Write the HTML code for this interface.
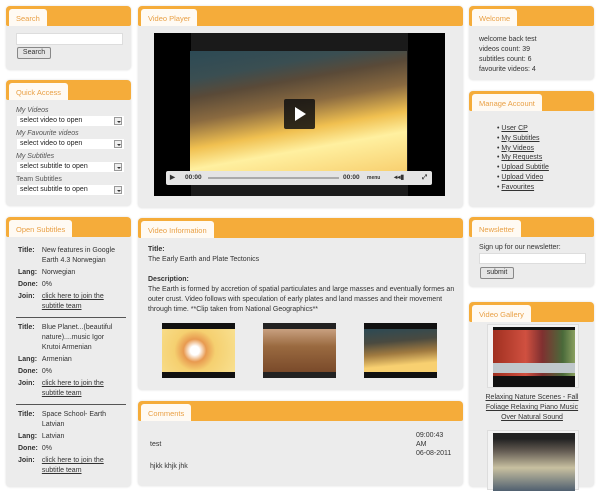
<!DOCTYPE html>
<html><head><meta charset="utf-8"><style>
*{margin:0;padding:0;box-sizing:border-box}
body{width:600px;height:480px;overflow:hidden;background:#fff;font-family:"Liberation Sans",sans-serif;font-size:7px;color:#333;position:relative}
.p{position:absolute;background:#ececec;border-radius:4px;box-shadow:0 0 2px #ddd}
.h{position:absolute;left:0;right:0;top:0;height:20px;background:#f5ac3a;border-radius:4px 4px 2px 2px}
.t{position:absolute;left:3px;top:3px;height:17px;background:#fffaf3;color:#e9a045;font-size:7.5px;padding:5px 7px 0 7px;border-radius:3px 3px 0 0}
.a{position:absolute}
.sel{position:absolute;height:10px;background:#fff;font-size:7px;padding:1px 3px;color:#222}
.sel b{position:absolute;right:2px;top:1px;width:8px;height:8px;border:1px solid #999;background:#eee}
.sel b:after{content:"";position:absolute;left:1.5px;top:2.5px;border:2px solid transparent;border-top:2px solid #333}
.it{font-style:italic;color:#555}
u{color:#333}
.btn{position:absolute;background:#e5e5e5;border:1px solid #888;border-radius:2px;font-size:7px;text-align:center;line-height:10px}
table td{font-size:7px;vertical-align:top;padding:1px 2px;line-height:10px}
</style></head><body>

<div class="p" style="left:6px;top:6px;width:125px;height:64px"><div class="h"></div><div class="t" style="left:3px">Search</div>
<div class="a" style="left:10px;top:27px;width:107px;height:12px;background:#fff;border:1px solid #ddd"></div>
<div class="btn" style="left:11px;top:41px;width:34px;height:12px">Search</div></div>

<div class="p" style="left:6px;top:80px;width:125px;height:126px"><div class="h"></div><div class="t">Quick Access</div>
<div class="a it" style="left:10px;top:27px">My Videos</div>
<div class="sel" style="left:11px;top:36px;width:107px">select video to open<b></b></div>
<div class="a it" style="left:10px;top:50px">My Favourite videos</div>
<div class="sel" style="left:11px;top:59px;width:107px">select video to open<b></b></div>
<div class="a it" style="left:10px;top:73px">My Subtitles</div>
<div class="sel" style="left:11px;top:82px;width:107px">select subtitle to open<b></b></div>
<div class="a" style="left:10px;top:96px;color:#555">Team Subtitles</div>
<div class="sel" style="left:11px;top:105px;width:107px">select subtitle to open<b></b></div></div>

<div class="p" style="left:6px;top:217px;width:125px;height:270px"><div class="h"></div><div class="t">Open Subtitles</div>
<table class="a" style="left:10px;top:28px;width:110px;border-collapse:collapse">
<tr><td><b>Title:</b></td><td>New features in Google Earth 4.3 Norwegian</td></tr>
<tr><td><b>Lang:</b></td><td>Norwegian</td></tr>
<tr><td><b>Done:</b></td><td>0%</td></tr>
<tr><td><b>Join:</b></td><td><u>click here to join the subtitle team</u></td></tr>
<tr><td colspan="2" style="padding:4px 0"><div style="border-top:1px solid #555"></div></td></tr>
<tr><td><b>Title:</b></td><td>Blue Planet...(beautiful nature)....music Igor Krutoi Armenian</td></tr>
<tr><td><b>Lang:</b></td><td>Armenian</td></tr>
<tr><td><b>Done:</b></td><td>0%</td></tr>
<tr><td><b>Join:</b></td><td><u>click here to join the subtitle team</u></td></tr>
<tr><td colspan="2" style="padding:4px 0"><div style="border-top:1px solid #555"></div></td></tr>
<tr><td><b>Title:</b></td><td>Space School- Earth Latvian</td></tr>
<tr><td><b>Lang:</b></td><td>Latvian</td></tr>
<tr><td><b>Done:</b></td><td>0%</td></tr>
<tr><td><b>Join:</b></td><td><u>click here to join the subtitle team</u></td></tr>
</table></div>

<div class="p" style="left:138px;top:6px;width:325px;height:202px"><div class="h"></div><div class="t">Video Player</div>
<div class="a" style="left:16px;top:27px;width:291px;height:163px;background:#000">
 <div class="a" style="left:37px;top:0;width:217px;height:163px;background:#1a1a1a"></div>
 <div class="a" style="left:36px;top:18px;width:217px;height:120px;background:linear-gradient(170deg,#2c4a55 0%,#3a4e52 18%,#5a4a38 30%,#8a6a40 45%,#f0c050 62%,#fff0a0 75%,#f8d070 100%)"></div>
 <div class="a" style="left:130px;top:66px;width:31px;height:30px;background:#111;opacity:.85;border-radius:2px"></div>
 <div class="a" style="left:141px;top:74px;border-left:11px solid #fff;border-top:7px solid transparent;border-bottom:7px solid transparent"></div>
 <div class="a" style="left:12px;top:138px;width:266px;height:14px;background:#e4e4e4;border-radius:2px;font-size:6.5px;font-weight:bold;line-height:14px;color:#333">
  <span class="a" style="left:4px">&#9654;</span><span class="a" style="left:19px">00:00</span>
  <span class="a" style="left:42px;top:6px;width:131px;height:2px;background:#aaa"></span>
  <span class="a" style="left:177px">00:00</span><span class="a" style="left:201px;font-size:5px">menu</span>
  <span class="a" style="left:228px">◂◂▮</span><span class="a" style="left:256px">⤢</span></div>
</div></div>

<div class="p" style="left:138px;top:218px;width:325px;height:172px"><div class="h"></div><div class="t">Video Information</div>
<div class="a" style="left:10px;top:27px;width:312px;line-height:10px;font-size:7px"><b>Title:</b><br>The Early Earth and Plate Tectonics<br><br><b>Description:</b><br>The Earth is formed by accretion of spatial particulates and large masses and eventually formes an outer crust. Video follows with speculation of early plates and land masses and their movement through time. **Clip taken from National Geographics**</div>
<div class="a" style="left:24px;top:105px;width:73px;height:55px;background:#111"><div class="a" style="left:0;top:6px;width:73px;height:43px;background:radial-gradient(circle at 45% 50%,#fff 10%,#e89a50 25%,#f5d070 45%,#f8e090)"></div></div>
<div class="a" style="left:125px;top:105px;width:73px;height:55px;background:#222"><div class="a" style="left:0;top:6px;width:73px;height:43px;background:linear-gradient(#c8a080,#9a6a40 40%,#7a4a2a)"></div></div>
<div class="a" style="left:226px;top:105px;width:73px;height:55px;background:#111"><div class="a" style="left:0;top:6px;width:73px;height:43px;background:linear-gradient(175deg,#2c4a55 0%,#4a4a40 30%,#a07a40 55%,#f8d070 80%)"></div></div>
</div>

<div class="p" style="left:138px;top:401px;width:325px;height:85px"><div class="h"></div><div class="t">Comments</div>
<div class="a" style="left:12px;top:40px">test</div>
<div class="a" style="left:12px;top:62px">hjkk khjk jhk</div>
<div class="a" style="left:278px;top:30px;line-height:9px">09:00:43<br>AM<br>06-08-2011</div></div>

<div class="p" style="left:469px;top:6px;width:125px;height:74px"><div class="h"></div><div class="t">Welcome</div>
<div class="a" style="left:10px;top:29px;line-height:10px">welcome back test<br>videos count: 39<br>subtitles count: 6<br>favourite videos: 4</div></div>

<div class="p" style="left:469px;top:91px;width:125px;height:116px"><div class="h"></div><div class="t">Manage Account</div>
<div class="a" style="left:28px;top:33px;line-height:9.8px">• <u>User CP</u><br>• <u>My Subtitles</u><br>• <u>My Videos</u><br>• <u>My Requests</u><br>• <u>Upload Subtitle</u><br>• <u>Upload Video</u><br>• <u>Favourites</u></div></div>

<div class="p" style="left:469px;top:217px;width:125px;height:70px"><div class="h"></div><div class="t">Newsletter</div>
<div class="a" style="left:10px;top:27px">Sign up for our newsletter:</div>
<div class="a" style="left:10px;top:36px;width:107px;height:11px;background:#fff;border:1px solid #ddd"></div>
<div class="btn" style="left:11px;top:50px;width:34px;height:12px">submit</div></div>

<div class="p" style="left:469px;top:302px;width:125px;height:185px"><div class="h"></div><div class="t">Video Gallery</div>
<div class="a" style="left:18px;top:22px;width:92px;height:64px;background:#f3f3f3;border:1px solid #ddd"><div class="a" style="left:5px;top:2px;width:82px;height:60px;background:#111"><div class="a" style="left:0;top:3px;width:82px;height:46px;background:linear-gradient(90deg,#a03020,#d05040 40%,#803030 60%,#4a6a3a 85%,#8aa060)"></div><div class="a" style="left:0;top:36px;width:82px;height:10px;background:#c0c8cc"></div></div></div>
<div class="a" style="left:14px;top:91px;width:98px;text-align:center;line-height:10px"><u>Relaxing Nature Scenes - Fall Foliage Relaxing Piano Music Over Natural Sound</u></div>
<div class="a" style="left:18px;top:128px;width:92px;height:60px;background:#f3f3f3;border:1px solid #ddd"><div class="a" style="left:5px;top:2px;width:82px;height:58px;background:linear-gradient(#222 0,#222 10%,#605850 30%,#c8c0a0 60%,#506070)"></div></div>
</div>

</body></html>
